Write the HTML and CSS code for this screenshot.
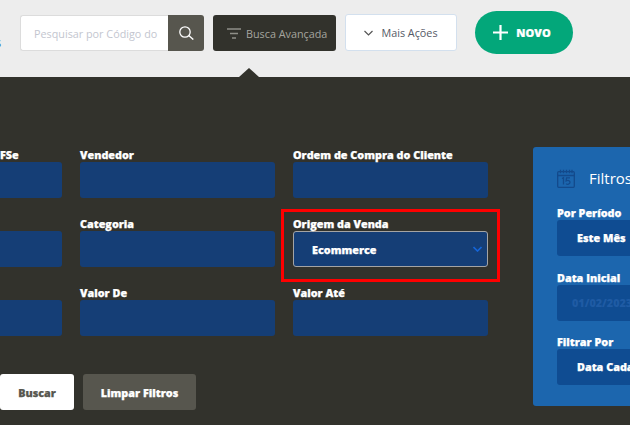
FILE: index.html
```html
<!DOCTYPE html>
<html lang="pt-BR">
<head>
    <meta charset="UTF-8">
    <title>Pedidos de Venda</title>
    <link rel="stylesheet" href="styles.css">
</head>
<body>
    <header class="topbar">
        <span class="crumb">s</span>
        <div class="search">
            <input class="search-input" type="text" placeholder="Pesquisar por Código do">
            <button class="search-btn" aria-label="Pesquisar">
                <svg width="15" height="14" viewBox="0 0 15 14" fill="none" stroke="#fff" stroke-width="1.3"><circle cx="6" cy="6" r="5.200"/><path d="M9.800 9.600l4.500 4"/></svg>
            </button>
        </div>
        <button class="adv-btn">
            <svg width="14" height="11" viewBox="0 0 14 11" fill="none" stroke="#8f8f88" stroke-width="1.4"><path d="M0 1h14M3 5.500h8M5 10h4"/></svg>
            Busca Avançada
        </button>
        <button class="more-btn">
            <svg width="9" height="6" viewBox="0 0 9 6" fill="none" stroke="#555" stroke-width="1.2"><path d="M.5 1l4 4 4-4"/></svg>
            Mais Ações
        </button>
        <button class="new-btn">
            <svg width="15" height="15" viewBox="0 0 15 15" fill="none" stroke="#fff" stroke-width="2.200"><path d="M7.500 0v15M0 7.500h15"/></svg>
            NOVO
        </button>
    </header>

    <main class="panel">
        <section class="filters">
            <div class="filter-grid">
                <div class="field"><label class="long-label">Número da Nota Fiscal/NFSe</label><div class="box"></div></div>
                <div class="field"><label>Vendedor</label><div class="box"></div></div>
                <div class="field"><label>Ordem de Compra do Cliente</label><div class="box"></div></div>
                <div class="field"><label>Situação</label><div class="box"></div></div>
                <div class="field"><label>Categoria</label><div class="box"></div></div>
                <div class="field highlighted">
                    <label>Origem da Venda</label>
                    <div class="box selected">Ecommerce
                        <svg width="9" height="6" viewBox="0 0 9 6" fill="none" stroke="#1565d8" stroke-width="1.6"><path d="M.5 1l4 4 4-4"/></svg>
                    </div>
                </div>
                <div class="field"><label>Forma</label><div class="box"></div></div>
                <div class="field"><label>Valor De</label><div class="box"></div></div>
                <div class="field"><label>Valor Até</label><div class="box"></div></div>
            </div>
            <div class="actions">
                <button class="btn-search">Buscar</button>
                <button class="btn-clear">Limpar Filtros</button>
            </div>
        </section>

        <aside class="dates">
            <div class="dates-title">
                <svg width="18" height="19" viewBox="0 0 18 19" fill="none" stroke="#134a8c" stroke-width="1.3"><rect x=".7" y="2.700" width="16.600" height="15.600" rx="1"/><path d="M.7 6.500h16.600M3.500.7v3.500M6.500.7v3.500M9.500.7v3.500M12.500.7v3.500M15 .7v3.500M5 9.500l1.500-.8v6.800M13 8.800h-3.500l-.4 3c2-1 3.900-.2 3.900 1.500 0 2-2.700 2.600-4 1.300"/></svg>
                <span>Filtros de Data</span>
            </div>
            <div class="date-field"><label>Por Período</label><div class="date-box">Este Mês</div></div>
            <div class="date-field"><label>Data Inicial</label><div class="date-box muted">01/02/2023</div></div>
            <div class="date-field tight"><label>Filtrar Por</label><div class="date-box">Data Cadastro</div></div>
        </aside>
    </main>
</body>
</html>
```

FILE: styles.css
```css
* {
    box-sizing: border-box;
}
html, body {
    margin: 0;
    height: 425px;
    overflow: hidden;
}
body {
    font-family: "Open Sans", sans-serif;
    background-color: #32322c;
}
button {
    font-family: inherit;
    cursor: pointer;
}

.topbar {
    position: relative;
    height: 77px;
    padding: 15px 0 0 20px;
    display: flex;
    align-items: flex-start;
    background-color: #ededed;
}
.crumb {
    position: absolute;
    left: -5px;
    top: 33px;
    color: #2f6db0;
    font-size: 13px;
}
.search {
    display: flex;
    width: 184px;
    height: 36px;
    margin-right: 9px;
}
.search-input {
    width: 148px;
    height: 36px;
    padding: 0 2px 0 13px;
    border: 1px solid #dcdcdc;
    border-right: none;
    border-radius: 3px 0 0 3px;
    font-family: inherit;
    font-size: 10.800px;
    background-color: #fff;
}
.search-input::placeholder {
    color: #c3c6cf;
    opacity: 1;
}
.search-btn {
    width: 36px;
    height: 36px;
    padding: 0;
    border: none;
    border-radius: 0 3px 3px 0;
    display: flex;
    align-items: center;
    justify-content: center;
    background-color: #57564e;
}
.adv-btn {
    position: relative;
    width: 123px;
    height: 36px;
    margin-right: 9px;
    padding: 0 0 0 14px;
    border: none;
    border-radius: 3px;
    display: flex;
    align-items: center;
    gap: 5px;
    font-size: 10.800px;
    color: #a5a59f;
    background-color: #32322c;
}
.adv-btn::after {
    content: "";
    position: absolute;
    left: 26px;
    top: 53px;
    border-left: 10px solid transparent;
    border-right: 10px solid transparent;
    border-bottom: 9px solid #32322c;
}
.more-btn {
    width: 112px;
    height: 37px;
    margin: -1px 18px 0 0;
    padding: 0;
    border: 1px solid #d3e0ee;
    border-radius: 3px;
    display: flex;
    align-items: center;
    justify-content: center;
    gap: 8px;
    font-size: 10.800px;
    color: #555a66;
    background-color: #fff;
}
.new-btn {
    width: 98px;
    height: 43px;
    margin-top: -4px;
    padding: 0 4px 0 0;
    border: none;
    border-radius: 22px;
    display: flex;
    align-items: center;
    justify-content: center;
    gap: 8px;
    font-size: 11px;
    font-weight: 800;
    -webkit-text-stroke: .2px #fff;
    color: #fff;
    background-color: #03a77a;
}

.panel {
    display: flex;
    align-items: flex-start;
    margin-left: -133px;
}
.filters {
    flex: none;
    width: 621px;
    margin-right: 45px;
    padding-top: 70px;
}
.filter-grid {
    display: grid;
    grid-template-columns: repeat(3, 195px);
    column-gap: 18px;
    row-gap: 18px;
}
.field {
    position: relative;
}
.field label, .date-field label {
    display: block;
    height: 15px;
    line-height: 15px;
    font-size: 10.800px;
    font-weight: 800;
    -webkit-text-stroke: .25px #fff;
    color: #fff;
}
.field .long-label {
    margin-left: -7px;
}
.box {
    height: 36px;
    border-radius: 3px;
    background-color: #153e76;
}
.selected {
    display: flex;
    align-items: center;
    justify-content: space-between;
    padding: 0 5px 0 18px;
    border: 1px solid #a4a4a4;
    font-size: 10.800px;
    font-weight: 800;
    -webkit-text-stroke: .25px #fff;
    color: #fff;
}
.highlighted::after {
    content: "";
    position: absolute;
    left: -12px;
    top: -7px;
    width: 219px;
    height: 73px;
    box-sizing: border-box;
    border: 3px solid #f00;
}
.actions {
    display: flex;
    gap: 9px;
    margin-top: 38px;
    padding-left: 133px;
}
.actions button {
    height: 36px;
    padding: 0;
    border: none;
    border-radius: 3px;
    font-size: 10.800px;
    font-weight: 800;
    -webkit-text-stroke: .25px;
}
.btn-search {
    width: 74px;
    color: #57564e;
    background-color: #fff;
}
.btn-clear {
    width: 113px;
    color: #fff;
    background-color: #57564e;
}

.dates {
    flex: none;
    width: 220px;
    height: 259px;
    margin-top: 70px;
    padding: 16px 0 0 24px;
    border-radius: 3px;
    background-color: #1c66ae;
}
.dates-title {
    display: flex;
    align-items: center;
    gap: 14px;
    height: 30px;
    margin-bottom: 12px;
    font-size: 15px;
    color: #fff;
}
.date-field {
    margin-bottom: 14px;
}
.tight {
    margin-top: -1px;
}
.date-box {
    height: 36px;
    padding-left: 20px;
    border-radius: 3px;
    line-height: 36px;
    font-size: 10.800px;
    font-weight: 800;
    -webkit-text-stroke: .25px #fff;
    color: #fff;
    background-color: #0f4c92;
}
.muted {
    padding-left: 15px;
    -webkit-text-stroke: 0;
    color: #1f5ba4;
}
```
